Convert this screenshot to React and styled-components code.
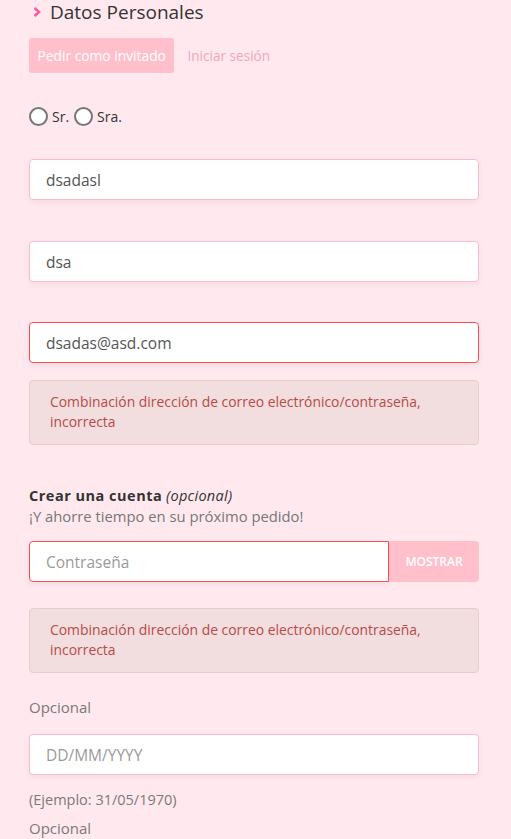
import React from "react";
import styled, { createGlobalStyle } from "styled-components";

const Global = createGlobalStyle`
  html, body { margin: 0; padding: 0; background: #ffe9ee; }
  body { font-family: "Open Sans", "Liberation Sans", sans-serif; }
  * { box-sizing: border-box; }
`;

const Page = styled.div`
  width: 511px;
  height: 839px;
  overflow: hidden;
  background: #ffe9ee;
  padding: 0 32px 0 29px;
`;

const Title = styled.h2`
  margin: 0;
  height: 24px;
  display: flex;
  align-items: center;
  gap: 9px;
  padding-left: 4px;
  font-size: 19px;
  font-weight: 400;
  color: #333;
  line-height: 24px;
`;

const Chevron = styled.svg`
  width: 8px;
  height: 12px;
  flex: none;
`;

const AuthRow = styled.div`
  display: flex;
  align-items: center;
  gap: 13px;
  margin-top: 14px;
`;

const GuestButton = styled.button`
  height: 35px;
  padding: 0 8.5px;
  border: none;
  border-radius: 3px;
  background: #ffc0cb;
  color: #fff;
  font: inherit;
  font-size: 13.8px;
`;

const LoginLink = styled.a`
  color: #f2a7b8;
  font-size: 13.6px;
  text-decoration: none;
`;

const RadioRow = styled.div`
  display: flex;
  align-items: center;
  margin-top: 33px;
  height: 20px;
`;

const RadioLabel = styled.label`
  display: flex;
  align-items: center;
  gap: 4px;
  margin-right: 5px;
  font-size: 14px;
  color: #333;
`;

const RadioCircle = styled.span`
  width: 19px;
  height: 19px;
  border-radius: 50%;
  border: 2px solid #767676;
  background: #fff;
  flex: none;
`;

const Field = styled.div`
  margin-top: ${(p) => p.$mt || 0}px;
`;

const Input = styled.div`
  height: 41px;
  display: flex;
  align-items: center;
  padding-left: 16px;
  background: #fff;
  border: 1px solid ${(p) => (p.$error ? "#ff4d4f" : "#ffbcc8")};
  border-radius: ${(p) => (p.$joined ? "4px 0 0 4px" : "4px")};
  box-shadow: 0 3px 6px rgba(0, 0, 0, 0.05);
  font-size: 15.5px;
  color: ${(p) => (p.$placeholder ? "#9a9a9a" : "#555")};
  flex: 1;
`;

const Alert = styled.div`
  margin-top: ${(p) => p.$mt || 17}px;
  padding: 11px 20px 10px 20px;
  background: #f2dede;
  border: 1px solid #ebcccc;
  border-radius: 4px;
  color: #b94a48;
  font-size: 13.9px;
  line-height: 20px;
  min-height: 65px;
`;

const AccountTitle = styled.div`
  margin-top: 41px;
  font-size: 14.5px;
  color: #333;
  line-height: 20px;
  strong { font-weight: 700; letter-spacing: 0.5px; }
  em { font-weight: 400; letter-spacing: 0.3px; }
`;

const AccountSub = styled.div`
  font-size: 14.8px;
  color: #777;
  line-height: 20px;
`;

const PasswordRow = styled.div`
  display: flex;
  margin-top: 15px;
`;

const ShowButton = styled.button`
  width: 90px;
  height: 41px;
  border: none;
  border-radius: 0 4px 4px 0;
  background: #ffc0cb;
  color: #fff;
  font: inherit;
  font-size: 12px;
  font-weight: 600;
`;

const Help = styled.div`
  font-size: ${(p) => p.$size || 15}px;
  color: #7a7a7a;
  line-height: 20px;
  margin-top: ${(p) => p.$mt || 0}px;
`;

export default function App() {
  return (
    <Page>
      <Global />
      <Title>
        <Chevron viewBox="0 0 8 12">
          <path d="M1.5 2 L6 6 L1.5 10" fill="none" stroke="#ff5aa0" strokeWidth="2.6" />
        </Chevron>
        Datos Personales
      </Title>
      <AuthRow>
        <GuestButton>Pedir como invitado</GuestButton>
        <LoginLink href="#">Iniciar sesión</LoginLink>
      </AuthRow>
      <RadioRow>
        <RadioLabel>
          <RadioCircle />
          Sr.
        </RadioLabel>
        <RadioLabel>
          <RadioCircle />
          Sra.
        </RadioLabel>
      </RadioRow>
      <Field $mt={33}>
        <Input>dsadasl</Input>
      </Field>
      <Field $mt={41}>
        <Input>dsa</Input>
      </Field>
      <Field $mt={40}>
        <Input $error>dsadas@asd.com</Input>
      </Field>
      <Alert>Combinación dirección de correo electrónico/contraseña, incorrecta</Alert>
      <AccountTitle>
        <strong>Crear una cuenta</strong> <em>(opcional)</em>
      </AccountTitle>
      <AccountSub>¡Y ahorre tiempo en su próximo pedido!</AccountSub>
      <PasswordRow>
        <Input $error $joined $placeholder>Contraseña</Input>
        <ShowButton>MOSTRAR</ShowButton>
      </PasswordRow>
      <Alert $mt={26}>Combinación dirección de correo electrónico/contraseña, incorrecta</Alert>
      <Help $mt={24}>Opcional</Help>
      <Field $mt={17}>
        <Input $placeholder>DD/MM/YYYY</Input>
      </Field>
      <Help $mt={15} $size={14.5}>(Ejemplo: 31/05/1970)</Help>
      <Help $mt={8}>Opcional</Help>
    </Page>
  );
}
